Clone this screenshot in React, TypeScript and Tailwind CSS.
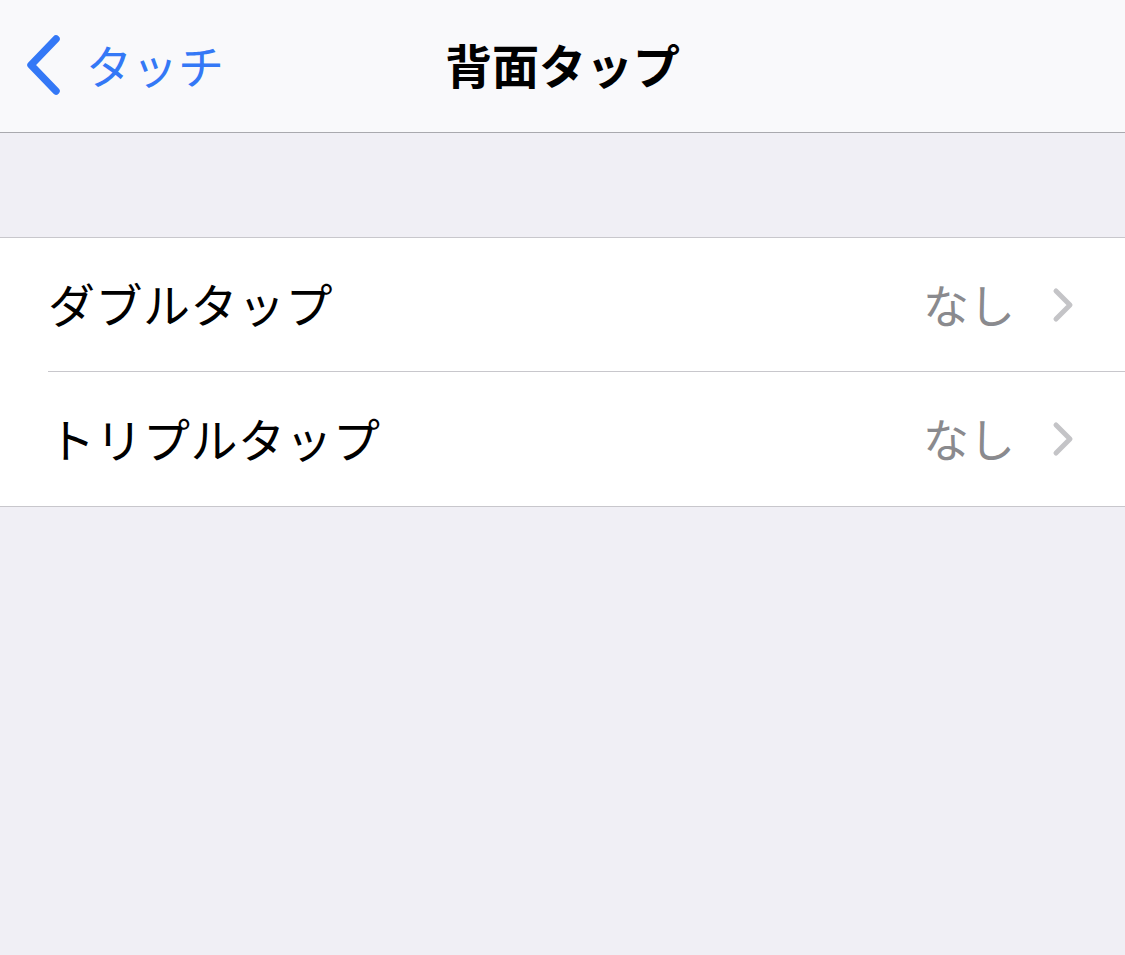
const font = { fontFamily: '"Noto Sans CJK JP", "Noto Sans", sans-serif' }

function Chevron() {
    return (
        <svg width="24" height="36" viewBox="0 0 24 36" fill="none">
            <path d="M5 4 L19 18 L5 32" stroke="#c4c4c7" strokeWidth="5" strokeLinecap="round" strokeLinejoin="round" />
        </svg>
    )
}

function BackChevron() {
    return (
        <svg width="38" height="62" viewBox="0 0 38 62" fill="none">
            <path d="M32 5 L7 31 L32 57" stroke="#3478f6" strokeWidth="7.5" strokeLinecap="round" strokeLinejoin="round" />
        </svg>
    )
}

function Row({ label, value, last }: { label: string, value: string, last?: boolean }) {
    return (
        <div className="flex h-[134px] items-stretch pl-12 bg-white">
            <div className={`flex flex-1 items-center justify-between pr-[50px] ${last ? '' : 'border-b border-[#c8c7cc]'}`}>
                <span className="text-[47px] tracking-[0.5px] text-black leading-none pb-[4px]">{label}</span>
                <div className="flex items-center gap-[36px]">
                    <span className="text-[46px] text-[#8a8a8e] leading-none pb-[4px]">{value}</span>
                    <Chevron />
                </div>
            </div>
        </div>
    )
}

export default function App() {
    return (
        <div className="w-[1125px] h-[955px] bg-[#f0eff5] flex flex-col" style={font}>
            <div className="relative h-[133px] bg-[#f9f9fb] border-b border-[#a9a9ae] flex items-center pb-[2px]">
                <div className="flex items-center pl-[24px] text-[#3478f6]">
                    <BackChevron />
                    <span className="text-[46px] ml-[24px] leading-none pb-[2px]">タッチ</span>
                </div>
                <p className="absolute left-1/2 -translate-x-1/2 top-[40px] text-[47px] font-bold text-black leading-none">背面タップ</p>
            </div>
            <div className="h-[104px]" />
            <div className="border-y border-[#c8c7cc] bg-white">
                <Row label="ダブルタップ" value="なし" />
                <Row label="トリプルタップ" value="なし" last />
            </div>
        </div>
    )
}
